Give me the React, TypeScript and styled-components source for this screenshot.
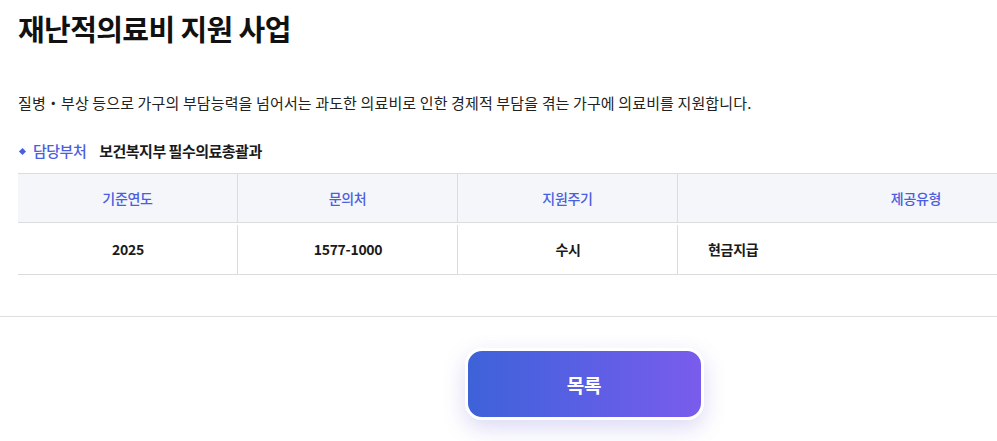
import React from "react";
import styled, { createGlobalStyle } from "styled-components";

const Global = createGlobalStyle`
  html, body { margin: 0; padding: 0; background: #fff; overflow: hidden; }
  body { font-family: "Noto Sans CJK KR", "Noto Sans", sans-serif; color: #111; }
  * { box-sizing: border-box; }
`;

const Page = styled.div`
  width: 997px;
  display: flex;
  flex-direction: column;
`;

const Content = styled.section`
  padding: 8px 0 0 18px;
  display: flex;
  flex-direction: column;
`;

const Title = styled.h1`
  margin: 0;
  font-size: 29px;
  font-weight: 700;
  line-height: 40px;
  letter-spacing: -0.6px;
  color: #111;
`;

const Desc = styled.p`
  margin: 44px 0 0;
  font-size: 15px;
  line-height: 22px;
  letter-spacing: 0.13px;
  color: #222;
`;

const DeptRow = styled.div`
  margin-top: 26px;
  display: flex;
  align-items: center;
  gap: 13px;
  font-size: 15px;
  line-height: 22px;
  letter-spacing: -0.5px;
`;

const DeptLabel = styled.span`
  display: flex;
  align-items: center;
  gap: 8px;
  color: #4a5fe0;
  font-weight: 500;
  &::before {
    content: "";
    width: 5px;
    height: 5px;
    background: #4a5fe0;
    transform: rotate(45deg);
    margin-left: 2px;
  }
`;

const DeptValue = styled.span`
  color: #1a1a1a;
  font-weight: 700;
`;

const Table = styled.div`
  margin-top: 11px;
  width: 1136px;
  display: grid;
  grid-template-columns: 220px 220px 220px 476px;
  border-top: 1px solid #dcdcdc;
  border-bottom: 1px solid #dcdcdc;
`;

const HeadCell = styled.div<{ $last?: boolean }>`
  height: 49px;
  display: flex;
  align-items: center;
  justify-content: center;
  background: #f5f6fa;
  color: #4a5fe0;
  font-size: 14px;
  font-weight: 500;
  letter-spacing: -0.3px;
  border-bottom: 1px solid #dcdcdc;
  border-right: ${(p) => (p.$last ? "none" : "1px solid #dcdcdc")};
`;

const BodyCell = styled.div<{ $last?: boolean; $left?: boolean }>`
  height: 51px;
  display: flex;
  align-items: center;
  justify-content: ${(p) => (p.$left ? "flex-start" : "center")};
  padding-left: ${(p) => (p.$left ? "30px" : "0")};
  font-size: 14px;
  font-weight: 700;
  color: #1a1a1a;
  letter-spacing: -0.3px;
  position: relative;
  &::after {
    content: "";
    display: ${(p) => (p.$last ? "none" : "block")};
    position: absolute;
    right: 0;
    top: 2px;
    bottom: 0;
    width: 1px;
    background: #dcdcdc;
  }
`;

const Divider = styled.hr`
  margin: 41px 0 0;
  border: none;
  border-top: 1px solid #dedede;
  width: 100%;
`;

const Footer = styled.div`
  display: flex;
  justify-content: center;
  padding: 31px 0 40px;
  padding-left: 171px;
`;

const ListButton = styled.button`
  width: 239px;
  height: 72px;
  border: 3px solid #fff;
  border-radius: 17px;
  background: linear-gradient(90deg, #3d62d8 0%, #5a5fe4 50%, #7a5cec 100%);
  box-shadow: 0 8px 22px rgba(90, 80, 210, 0.22);
  color: #fff;
  font-family: "Noto Sans CJK KR", "Noto Sans", sans-serif;
  font-size: 19px;
  font-weight: 700;
  letter-spacing: -0.3px;
  cursor: pointer;
`;

const heads = ["기준연도", "문의처", "지원주기", "제공유형"];
const values = ["2025", "1577-1000", "수시", "현금지급"];

export default function App() {
  return (
    <Page>
      <Global />
      <Content>
        <Title>재난적의료비 지원 사업</Title>
        <Desc>
          질병・부상 등으로 가구의 부담능력을 넘어서는 과도한 의료비로 인한 경제적 부담을 겪는 가구에 의료비를 지원합니다.
        </Desc>
        <DeptRow>
          <DeptLabel>담당부처</DeptLabel>
          <DeptValue>보건복지부 필수의료총괄과</DeptValue>
        </DeptRow>
        <Table>
          {heads.map((h, i) => (
            <HeadCell key={h} $last={i === heads.length - 1}>
              {h}
            </HeadCell>
          ))}
          {values.map((v, i) => (
            <BodyCell key={v} $last={i === values.length - 1} $left={i === values.length - 1}>
              {v}
            </BodyCell>
          ))}
        </Table>
      </Content>
      <Divider />
      <Footer>
        <ListButton>목록</ListButton>
      </Footer>
    </Page>
  );
}
